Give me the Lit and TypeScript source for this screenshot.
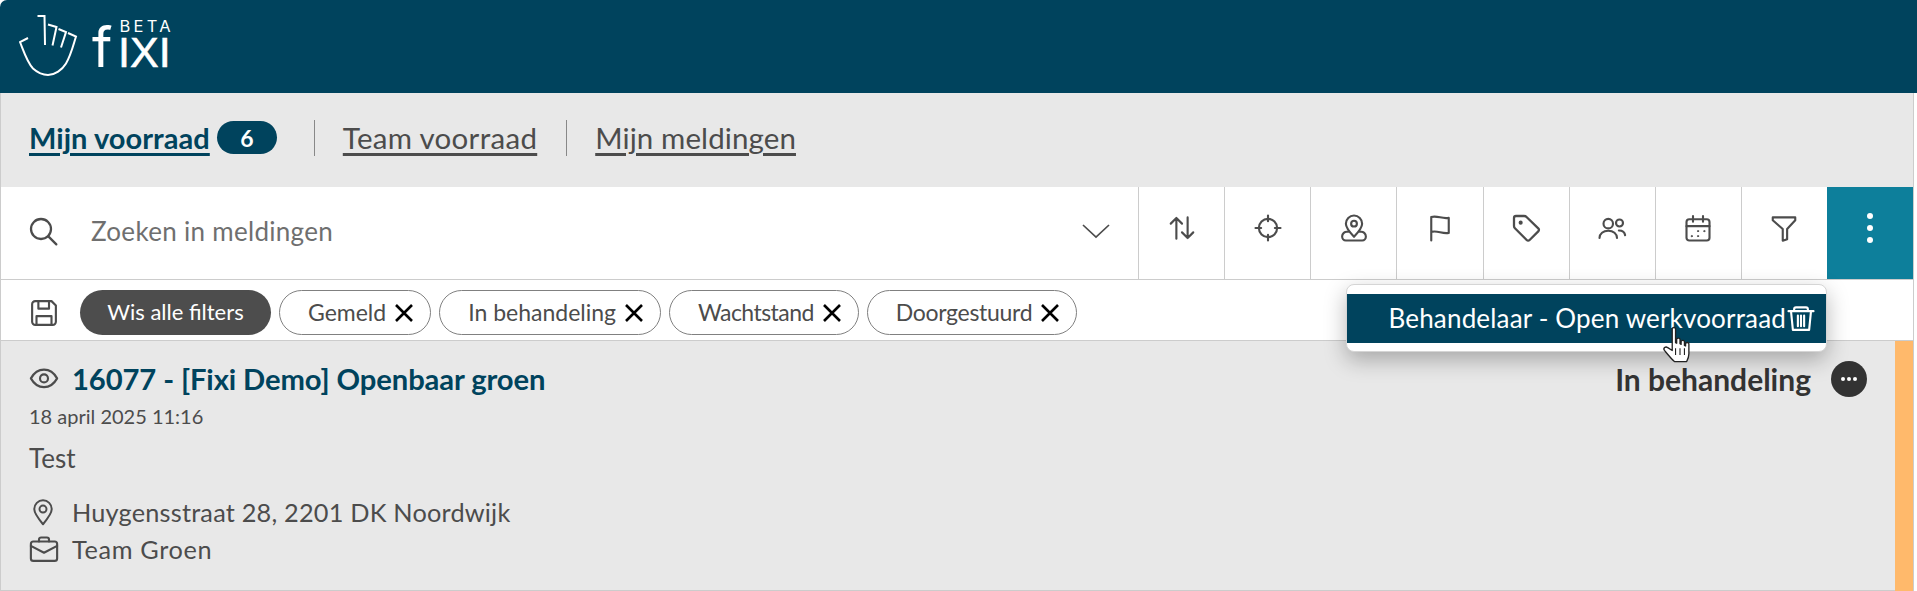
import { LitElement, html, css, svg } from "lit";
import { customElement } from "lit/decorators.js";

const ic = (w: number, h: number, body: unknown, vb = "0 0 24 24") => html`<svg width=${w} height=${h} viewBox=${vb} fill="none" stroke="currentColor" stroke-width="1.7" stroke-linecap="round" stroke-linejoin="round">${body}</svg>`;

const toolIcons = [
  ic(30, 30, svg`<path d="M7.5 20.5V4M3 8.5 7.5 4l4.500 4.500M16.500 3.500V20M12 15.500 16.500 20l4.500-4.500"/>`),
  ic(30, 30, svg`<circle cx="12" cy="12" r="7.300"/><path d="M12 2v4.500M12 17.500V22M2 12h4.500M17.500 12H22"/>`),
  ic(30, 30, svg`<path d="M12 19c-3.500-3.800-6.500-7-6.500-10.500a6.500 6.500 0 0 1 13 0C18.500 12 15.500 15.200 12 19Z"/><circle cx="12" cy="8.500" r="2.300"/><path d="M7.500 15H6.800A3.800 3.800 0 0 0 2.500 18.700c0 1.800 1.200 3.300 3 3.300h13c1.800 0 3-1.500 3-3.300A3.800 3.800 0 0 0 17.200 15h-.7"/>`),
  ic(30, 30, svg`<path d="M5 22V3.200c5-1.500 8.500 1.800 14 .7v12c-5.500 1-9-2.300-14-.8"/>`),
  ic(32, 32, svg`<path d="M3 4.500c0-1 .7-1.500 1.500-1.500h6.200c.7 0 1.200.2 1.700.7l8.800 8.600c.7.700.7 1.500 0 2.200l-6.500 6.500c-.7.700-1.500.7-2.200 0L3.700 12.200c-.5-.5-.7-1-.7-1.700Z"/><circle cx="8" cy="8" r=".7" fill="currentColor"/>`),
  ic(30, 30, svg`<circle cx="9" cy="8.500" r="3.800"/><path d="M2 20c0-3.500 3-5.800 7-5.800s7 2.300 7 5.800"/><circle cx="18" cy="8" r="2.800"/><path d="M17.500 14c2.700 0 4.700 1.400 5 3.800"/>`),
  ic(30, 30, svg`<rect x="2.800" y="5" width="18.400" height="17" rx="2.200"/><path d="M2.800 10.500h18.400M8 2.500V7M16 2.500V7"/><g fill="currentColor" stroke-width=".7"><circle cx="7" cy="18.500" r=".5"/><circle cx="12" cy="14.500" r=".5"/><circle cx="12" cy="18.500" r=".5"/><circle cx="17" cy="14.500" r=".5"/></g>`),
  ic(30, 30, svg`<path d="M3 3.500h18v2.300l-6.500 7V21l-3.500 1.200V12.800L3 5.800Z" />`),
];

const chips = [
  { label: "Gemeld", tracking: 0 },
  { label: "In behandeling", tracking: 0 },
  { label: "Wachtstand", tracking: -0.55 },
  { label: "Doorgestuurd", tracking: -0.3 },
];

@customElement("app-root")
export class AppRoot extends LitElement {
  static styles = css`
    :host { display: block; width: 1917px; height: 591px; overflow: hidden; background: #fff; font-family: "Lato", "Open Sans", sans-serif; color: #4c4c4c; position: relative; }
    .top { height: 93px; background: #00435d; border-top-left-radius: 7px; display: flex; align-items: flex-start; box-sizing: border-box; padding: 15px 0 0 19px; color: #fff; }
    .shell { width: 1914px; height: 498px; box-sizing: border-box; border-left: 1px solid #ccc; border-right: 1px solid #ccc; display: flex; flex-direction: column; }
    .logo-word { display: flex; margin-left: 13px; align-items: flex-end; height: 52px; }
    .logo-f { font-family: "Inter", sans-serif; font-weight: 400; font-size: 55px; line-height: 40px; width: 26px; }
    .logo-col { display: flex; flex-direction: column; align-items: flex-end; }
    .logo-beta { font-size: 16.500px; font-weight: 400; letter-spacing: 3.200px; margin-right: -3.200px; line-height: 17px; margin-bottom: 2px; font-family: "Inter", sans-serif; }
    .logo-ixi { font-family: "Liberation Sans", sans-serif; font-size: 43px; font-weight: 400; line-height: 30px; letter-spacing: 0; -webkit-text-stroke: .6px #fff; }

    .nav { height: 94px; background: #e8e8e8; display: flex; align-items: center; padding-left: 28px; box-sizing: border-box; padding-bottom: 5px; }
    .nav a { color: #4c4c4c; font-size: 29.500px; text-decoration: underline; text-decoration-thickness: 2.500px; text-underline-offset: 4px; letter-spacing: .3px; }
    .nav a.active { color: #00435d; font-weight: 700; font-size: 29px; text-decoration-thickness: 3px; letter-spacing: .05px; }
    .nav a.tight { letter-spacing: .1px; }
    .badge { background: #00435d; color: #fff; font-weight: 700; font-size: 23px; width: 60px; height: 33px; border-radius: 17px; display: flex; align-items: center; justify-content: center; margin-left: 7px; }
    .sep { width: 1px; height: 36px; background: #888; }
    .sep.a { margin: 0 28px 0 37px; }
    .sep.b { margin: 0 28px 0 29px; }

    .toolbar { height: 93px; flex: none; display: flex; border-bottom: 1px solid #ccc; box-sizing: border-box; background: #fff; }
    .search { flex: 1; display: flex; align-items: center; padding-left: 26px; padding-bottom: 4px; box-sizing: border-box; }
    .search .ph { margin-left: 32px; font-size: 26px; color: #6f6f6f; letter-spacing: .3px; flex: 1; }
    .search .chev { margin-right: 27px; display: flex; }
    .cell { width: 86.100px; border-left: 1px solid #ccc; box-sizing: border-box; display: flex; align-items: center; justify-content: center; padding-bottom: 10px; }
    .cell.more { background: #0d7f9b; border-left: 0; color: #fff; flex-direction: column; gap: 6px; }
    .dot { width: 6px; height: 6px; border-radius: 50%; background: #fff; }

    .filters { height: 61px; flex: none; display: flex; align-items: flex-start; gap: 8px; padding: 10px 0 0 28px; box-sizing: border-box; border-bottom: 1px solid #ccc; background: #fff; }
    .save { width: 30px; margin-right: 13px; padding-top: 8px; display: flex; }
    .wis { height: 45px; width: 191px; border-radius: 23px; background: #4d4d4d; color: #fff; font-size: 22px; display: flex; align-items: center; justify-content: center; padding-bottom: 2px; box-sizing: border-box; }
    .chip { height: 45px; border-radius: 23px; border: 1px solid #808080; box-sizing: border-box; font-size: 23px; padding: 0 16px 2px 28px; display: flex; align-items: center; gap: 8px; }
    .chip svg { color: #000; margin-top: 3px; }

    .item { flex: 1; background: #e8e8e8; display: flex; border-bottom: 1px solid #ccc; }
    .item-main { flex: 1; padding: 19px 0 0 28px; box-sizing: border-box; position: relative; min-width: 0; }
    .row { display: flex; align-items: center; }
    .icon-slot { width: 43px; flex: none; display: flex; }
    .title { color: #00435d; font-size: 29.200px; font-weight: 700; letter-spacing: -.1px; line-height: 38px; }
    .head { display: flex; justify-content: space-between; padding-right: 28px; }
    .status { display: flex; align-items: center; gap: 20px; font-size: 30px; font-weight: 700; color: #333; }
    .more-dot { width: 36px; height: 36px; border-radius: 50%; background: #333; display: flex; align-items: center; justify-content: center; gap: 2px; margin-top: -1px; }
    .more-dot i { width: 4px; height: 4px; background: #fff; border-radius: 50%; }
    .date { font-size: 20px; line-height: 26px; margin-top: 5px; }
    .desc { font-size: 26px; line-height: 30px; margin-top: 14px; }
    .addr { font-size: 25.300px; letter-spacing: .2px; line-height: 36px; }
    .addr.team { letter-spacing: .65px; margin-top: 1px; }
    .addr-list { margin-top: 21px; }
    .orange { width: 18px; background: #ffb96b; margin-bottom: -3px; position: relative; z-index: 1; }

    .menu { position: absolute; left: 1346px; top: 284px; width: 481px; height: 68px; background: #fff; border-radius: 8px; border: 1px solid #d5d5d5; box-sizing: border-box; padding-top: 9px; box-shadow: 0 8px 22px rgba(0,0,0,.28); z-index: 3; }
    .menu-item { height: 49px; background: #00435d; color: #fff; display: flex; align-items: center; justify-content: flex-end; padding-right: 10px; font-size: 26px; letter-spacing: .17px; gap: 0; white-space: nowrap; padding-bottom: 2px; box-sizing: border-box; }
    .cursor { position: absolute; left: 1662px; top: 326px; z-index: 4; }
  `;

  render() {
    return html`
      <div class="top">
        <svg width="60" height="62" viewBox="19 15 60 62" fill="none" stroke="#fff" stroke-width="2" stroke-linejoin="miter">
          <path d="M37.500 16H44.500L45 45M48 24.500 56.500 27 52.500 45.500M58.500 29 66 32 61 47.500M68 33 76 36.500C73 46 71 55 66 63.500 62 70 55 75 48 75 43 75 38 73 33 68.500 27 62 24 52 20 42L28 38"/>
        </svg>
        <div class="logo-word">
          <span class="logo-f">f</span>
          <div class="logo-col">
            <span class="logo-beta">BETA</span>
            <span class="logo-ixi">IXI</span>
          </div>
        </div>
      </div>
      <div class="shell">
        <div class="nav">
          <a class="active">Mijn voorraad</a>
          <span class="badge">6</span>
          <span class="sep a"></span>
          <a>Team voorraad</a>
          <span class="sep b"></span>
          <a class="tight">Mijn meldingen</a>
        </div>
        <div class="toolbar">
          <div class="search">
            ${ic(32, 32, svg`<circle cx="10.500" cy="10.500" r="7.500"/><path d="m16 16 6 6"/>`)}
            <span class="ph">Zoeken in meldingen</span>
            <span class="chev"><svg width="30" height="16" viewBox="0 0 30 16" fill="none" stroke="#4c4c4c" stroke-width="1.700"><path d="M2 2l13 12L28 2"/></svg></span>
          </div>
          ${toolIcons.map((i) => html`<div class="cell">${i}</div>`)}
          <div class="cell more"><span class="dot"></span><span class="dot"></span><span class="dot"></span></div>
        </div>
        <div class="filters">
          <span class="save">${ic(30, 30, svg`<path d="M2.500 5A2.500 2.500 0 0 1 5 2.500h13l3.500 3.500v13A2.500 2.500 0 0 1 19 21.500H5A2.500 2.500 0 0 1 2.500 19Z"/><path d="M7.500 2.500V8.500h8.500V2.500M6 21.500V14.500h12v7"/>`)}</span>
          <div class="wis">Wis alle filters</div>
          ${chips.map((c) => html`<div class="chip" style="letter-spacing:${c.tracking}px">${c.label}<svg width="20" height="20" viewBox="0 0 20 20" fill="none" stroke="#000" stroke-width="2.600"><path d="M2 2l16 16M18 2 2 18"/></svg></div>`)}
        </div>
        <div class="item">
          <div class="item-main">
            <div class="head">
              <div class="row">
                <span class="icon-slot">${ic(30, 30, svg`<path d="M1.500 11.500C4 7 8 4.500 12 4.500s8 2.500 10.500 7c-2.500 4.500-6.500 7-10.500 7s-8-2.500-10.500-7Z"/><circle cx="12" cy="11.500" r="3.200"/>`)}</span>
                <span class="title">16077 - [Fixi Demo] Openbaar groen</span>
              </div>
              <div class="status">In behandeling <span class="more-dot"><i></i><i></i><i></i></span></div>
            </div>
            <div class="date">18 april 2025 11:16</div>
            <div class="desc">Test</div>
            <div class="addr-list">
              <div class="row addr"><span class="icon-slot">${ic(28, 30, svg`<path d="M12 22.500C7 16.500 4.500 13 4.500 9.500a7.500 7.500 0 0 1 15 0c0 3.500-2.500 7-7.500 13Z"/><circle cx="12" cy="9.500" r="3"/>`)}</span>Huygensstraat 28, 2201 DK Noordwijk</div>
              <div class="row addr team"><span class="icon-slot">${ic(30, 30, svg`<rect x="1.500" y="6" width="21" height="15.500" rx="2"/><path d="M8 6V4.500c0-1 .7-1.700 1.700-1.700h4.600c1 0 1.700.7 1.700 1.700V6M1.500 9.500 12 15l10.500-5.500"/>`)}</span>Team Groen</div>
            </div>
          </div>
          <div class="orange"></div>
        </div>
      </div>
      <div class="menu">
        <div class="menu-item">Behandelaar - Open werkvoorraad
          ${ic(30, 32, svg`<path d="M2 6.500h20M6.500 6.500V5c0-1 .7-1.500 1.500-1.500h8c.8 0 1.500.5 1.500 1.500v1.500M4 6.500l1.500 15h13l1.500-15M9.500 10v8.500M12 10v8.500M14.500 10v8.500"/>`)}
        </div>
      </div>
      <svg class="cursor" width="36" height="40" viewBox="0 0 32 36">
        <path d="M9 2.500c0-1.500 3-1.500 3 0V15l1 .5V12c0-1.500 3-1.500 3 0v4l1 .5V14c0-1.500 3-1.500 3 0v3.500l1 .5v-2c0-1.500 3-1.500 3 0v9c0 3-1 5-2 7H11c-2-1.500-4-4-9-10-1.500-2 1-4 3-2.500L9 22Z" fill="#fff" stroke="#222" stroke-width="1.200" stroke-linejoin="round"/>
        <path d="M12 20v6M16 20v6M20 20v6" stroke="#222" stroke-width="1"/>
      </svg>
    `;
  }
}
